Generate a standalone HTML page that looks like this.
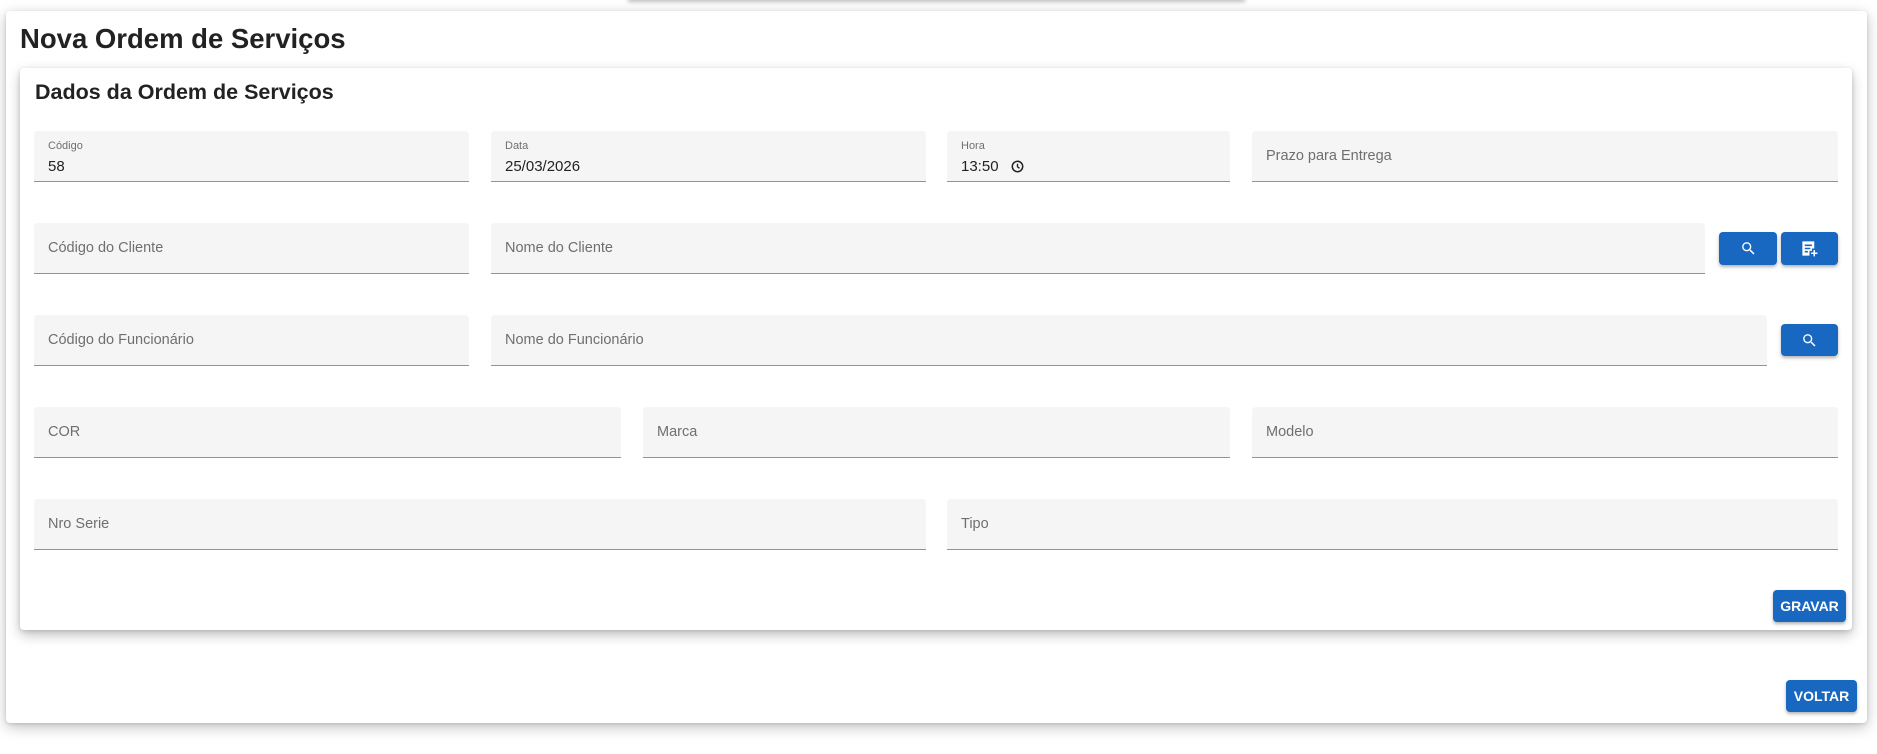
<!DOCTYPE html>
<html><head><meta charset="utf-8"><style>
*{box-sizing:border-box;margin:0;padding:0}
body{width:1877px;height:754px;background:#fff;font-family:"Liberation Sans",Arial,sans-serif;position:relative;overflow:hidden;color:#212121}
.topbar{position:absolute;left:628px;top:-10px;width:617px;height:10px;box-shadow:0 2px 4px rgba(0,0,0,.25);background:#fff}
.outer{position:absolute;left:6px;top:11px;width:1861px;height:712px;background:#fff;border-radius:4px;box-shadow:0 4px 14px rgba(0,0,0,.25),0 1px 3px rgba(0,0,0,.12)}
.inner{position:absolute;left:20px;top:68px;width:1832px;height:562px;background:#fff;border-radius:4px;box-shadow:0 5px 12px rgba(0,0,0,.25),0 1px 4px rgba(0,0,0,.12)}
h1{position:absolute;left:20px;top:23px;font-size:27.5px;font-weight:bold;color:#222}
h2{position:absolute;left:35px;top:80px;font-size:21.5px;font-weight:bold;color:#222}
.f{position:absolute;height:51px;background:#f5f5f5;border-radius:4px 4px 0 0;border-bottom:1px solid #949494}
.f .ph{position:absolute;left:14px;top:17px;font-size:14.5px;color:#6f6f6f}
.f .lb{position:absolute;left:14px;top:9px;font-size:11px;color:#6f6f6f}
.f .v{position:absolute;left:14px;top:27px;font-size:15px;color:#222}
.b{position:absolute;background:#1867c0;border-radius:4px;box-shadow:0 2px 3px rgba(0,0,0,.3);color:#fff;font-weight:bold;font-size:14px;display:flex;align-items:center;justify-content:center}
</style></head><body>
<div class="topbar"></div>
<div class="outer"></div>
<h1>Nova Ordem de Serviços</h1>
<div class="inner"></div>
<h2>Dados da Ordem de Serviços</h2>

<div class="f" style="left:34px;top:131px;width:435px"><span class="lb">Código</span><span class="v">58</span></div>
<div class="f" style="left:491px;top:131px;width:435px"><span class="lb">Data</span><span class="v">25/03/2026</span></div>
<div class="f" style="left:947px;top:131px;width:283px"><span class="lb">Hora</span><span class="v">13:50 <svg style="margin-left:8px;vertical-align:-2px" width="13" height="13" viewBox="0 0 14 14"><circle cx="7" cy="7" r="5.6" fill="none" stroke="#222" stroke-width="1.6"/><path d="M7 4v3.3l2.2 1.6" fill="none" stroke="#222" stroke-width="1.5"/></svg></span></div>
<div class="f" style="left:1252px;top:131px;width:586px"><span class="ph">Prazo para Entrega</span></div>

<div class="f" style="left:34px;top:223px;width:435px"><span class="ph">Código do Cliente</span></div>
<div class="f" style="left:491px;top:223px;width:1214px"><span class="ph">Nome do Cliente</span></div>
<div class="b" style="left:1719px;top:232px;width:58px;height:33px"><svg width="17" height="17" viewBox="0 0 24 24"><path fill="#fff" d="M15.5 14h-.79l-.28-.27A6.47 6.47 0 0016 9.5 6.5 6.5 0 109.5 16c1.61 0 3.09-.59 4.23-1.57l.27.28v.79l5 4.99L20.49 19l-4.99-5zm-6 0C7.01 14 5 11.99 5 9.5S7.01 5 9.5 5 14 7.01 14 9.5 11.99 14 9.5 14z"/></svg></div>
<div class="b" style="left:1781px;top:232px;width:57px;height:33px"><svg width="19" height="19" viewBox="0 0 24 24"><path fill="#fff" d="M3 3h15v9h-3v3h-3v6H3zM6 7v2h9V7zm0 4v2h7v-2zm0 4v2h4v-2zM17 14h2v3h3v2h-3v3h-2v-3h-3v-2h3z"/></svg></div>

<div class="f" style="left:34px;top:315px;width:435px"><span class="ph">Código do Funcionário</span></div>
<div class="f" style="left:491px;top:315px;width:1276px"><span class="ph">Nome do Funcionário</span></div>
<div class="b" style="left:1781px;top:324px;width:57px;height:32px"><svg width="17" height="17" viewBox="0 0 24 24"><path fill="#fff" d="M15.5 14h-.79l-.28-.27A6.47 6.47 0 0016 9.5 6.5 6.5 0 109.5 16c1.61 0 3.09-.59 4.23-1.57l.27.28v.79l5 4.99L20.49 19l-4.99-5zm-6 0C7.01 14 5 11.990 5 9.5S7.01 5 9.5 5 14 7.01 14 9.5 11.99 14 9.5 14z"/></svg></div>

<div class="f" style="left:34px;top:407px;width:587px"><span class="ph">COR</span></div>
<div class="f" style="left:643px;top:407px;width:587px"><span class="ph">Marca</span></div>
<div class="f" style="left:1252px;top:407px;width:586px"><span class="ph">Modelo</span></div>

<div class="f" style="left:34px;top:499px;width:892px"><span class="ph">Nro Serie</span></div>
<div class="f" style="left:947px;top:499px;width:891px"><span class="ph">Tipo</span></div>

<div class="b" style="left:1773px;top:590px;width:73px;height:32px">GRAVAR</div>
<div class="b" style="left:1786px;top:680px;width:71px;height:32px">VOLTAR</div>
</body></html>
